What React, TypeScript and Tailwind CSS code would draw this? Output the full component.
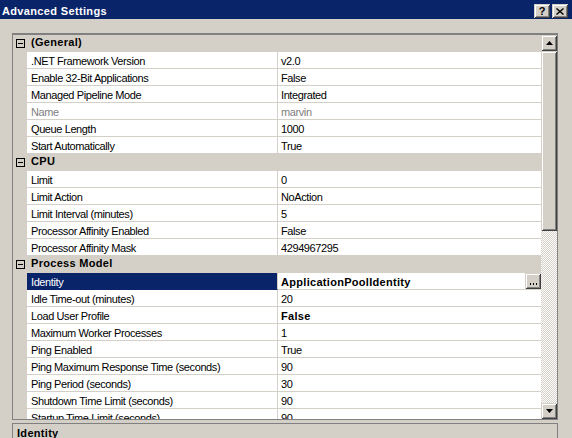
import React from "react";

type Row = {
  name: string;
  value: string;
  disabled?: boolean;
  bold?: boolean;
  selected?: boolean;
  button?: boolean;
};
type Cat = { title: string; rows: Row[] };

const cats: Cat[] = [
  {
    title: "(General)",
    rows: [
      { name: ".NET Framework Version", value: "v2.0" },
      { name: "Enable 32-Bit Applications", value: "False" },
      { name: "Managed Pipeline Mode", value: "Integrated" },
      { name: "Name", value: "marvin", disabled: true },
      { name: "Queue Length", value: "1000" },
      { name: "Start Automatically", value: "True" },
    ],
  },
  {
    title: "CPU",
    rows: [
      { name: "Limit", value: "0" },
      { name: "Limit Action", value: "NoAction" },
      { name: "Limit Interval (minutes)", value: "5" },
      { name: "Processor Affinity Enabled", value: "False" },
      { name: "Processor Affinity Mask", value: "4294967295" },
    ],
  },
  {
    title: "Process Model",
    rows: [
      { name: "Identity", value: "ApplicationPoolIdentity", bold: true, selected: true, button: true },
      { name: "Idle Time-out (minutes)", value: "20" },
      { name: "Load User Profile", value: "False", bold: true },
      { name: "Maximum Worker Processes", value: "1" },
      { name: "Ping Enabled", value: "True" },
      { name: "Ping Maximum Response Time (seconds)", value: "90" },
      { name: "Ping Period (seconds)", value: "30" },
      { name: "Shutdown Time Limit (seconds)", value: "90" },
      { name: "Startup Time Limit (seconds)", value: "90" },
    ],
  },
];

const bevel =
  "bg-[#d4d0c8] shadow-[inset_1px_1px_#d4d0c8,inset_-1px_-1px_#404040,inset_2px_2px_#ffffff,inset_-2px_-2px_#808080]";

function MinusBox() {
  return (
    <div className="w-[9px] h-[9px] border border-black bg-[#d4d0c8] flex items-center justify-center">
      <div className="w-[5px] h-px bg-black" />
    </div>
  );
}

function CategoryRow({ title }: { title: string }) {
  return (
    <div className="flex h-[17px] shrink-0 bg-[#d4d0c8]">
      <div className="w-[14px] shrink-0 flex items-center pl-[3px]">
        <MinusBox />
      </div>
      <div className="pl-[4px] font-bold tracking-[0.3px] leading-[15px] text-black whitespace-nowrap">
        {title}
      </div>
    </div>
  );
}

function PropRow({ row }: { row: Row }) {
  const nameCls = row.selected
    ? "bg-[#0a246a] text-white border-b-[#0a246a]"
    : row.disabled
    ? "bg-white text-[#808080]"
    : "bg-white text-black";
  return (
    <div className="flex h-[17px] shrink-0">
      <div className="w-[14px] shrink-0 bg-[#d4d0c8]" />
      <div
        className={`w-[251px] shrink-0 border-b border-r border-[#d4d0c8] pl-[4px] leading-[18px] tracking-[-0.4px] whitespace-nowrap overflow-hidden ${nameCls}`}
      >
        {row.name}
      </div>
      <div className="flex-1 flex border-b border-[#d4d0c8] bg-white overflow-hidden">
        <div
          className={`flex-1 pl-[3px] leading-[18px] whitespace-nowrap ${
            row.bold ? "font-bold tracking-[0.3px]" : "tracking-[-0.4px]"
          } ${row.disabled ? "text-[#808080]" : "text-black"}`}
        >
          {row.value}
        </div>
        {row.button && (
          <div className={`w-[16px] h-[16px] shrink-0 flex items-end justify-center gap-[2px] pb-[4px] ${bevel}`}>
            <div className="w-px h-[2px] bg-black" />
            <div className="w-px h-[2px] bg-black" />
            <div className="w-px h-[2px] bg-black" />
          </div>
        )}
      </div>
    </div>
  );
}

function Arrow({ up }: { up?: boolean }) {
  return (
    <svg width="7" height="4" viewBox="0 0 7 4">
      {up ? <path d="M3.5 0 L7 4 L0 4 Z" fill="#000" /> : <path d="M0 0 L7 0 L3.5 4 Z" fill="#000" />}
    </svg>
  );
}

export default function App() {
  return (
    <div className="w-[572px] h-[438px] overflow-hidden bg-[#d4d0c8] font-['Liberation_Sans',Arial,sans-serif] text-[11px] text-black">
      {/* Title bar */}
      <div className="h-[19px] bg-[#0a246a] flex items-start justify-between">
        <div className="pl-[2px] pt-[4px] leading-[14px] font-bold tracking-[0.35px] text-white whitespace-nowrap">
          Advanced Settings
        </div>
        <div className="flex gap-[2px] pr-[4px] pt-[4px]">
          <div className={`w-[16px] h-[14px] flex items-center justify-center font-bold text-[11px] leading-[14px] ${bevel}`}>
            ?
          </div>
          <div className={`w-[16px] h-[14px] flex items-center justify-center ${bevel}`}>
            <svg width="8" height="7" viewBox="0 0 8 7">
              <path d="M0.5 0.5 L7.5 6.5 M7.5 0.5 L0.5 6.5" stroke="#000" strokeWidth="1.4" />
            </svg>
          </div>
        </div>
      </div>

      {/* Property grid */}
      <div className="mt-[14px] ml-[12px] w-[546px] h-[387px] border-t-2 border-l border-r border-b border-[#808080] flex">
        <div className="flex-1 flex flex-col overflow-hidden">
          {cats.map((c) => (
            <React.Fragment key={c.title}>
              <CategoryRow title={c.title} />
              {c.rows.map((r) => (
                <PropRow key={r.name} row={r} />
              ))}
            </React.Fragment>
          ))}
        </div>
        <div className="w-[16px] shrink-0 flex flex-col">
          <div className={`h-[16px] shrink-0 flex items-center justify-center ${bevel}`}>
            <Arrow up />
          </div>
          <div className={`h-[180px] shrink-0 ${bevel}`} />
          <div className="flex-1 bg-[image:repeating-conic-gradient(#d4d0c8_0%_25%,#ffffff_0%_50%)] bg-[length:2px_2px]" />
          <div className={`h-[16px] shrink-0 flex items-center justify-center ${bevel}`}>
            <Arrow />
          </div>
        </div>
      </div>

      {/* Description panel */}
      <div className="mt-[3px] ml-[12px] w-[546px] h-[40px] border-t border-l border-r border-[#808080] pl-[4px] pt-[2px]">
        <div className="font-bold tracking-[0.3px] leading-[14px]">Identity</div>
      </div>
    </div>
  );
}
